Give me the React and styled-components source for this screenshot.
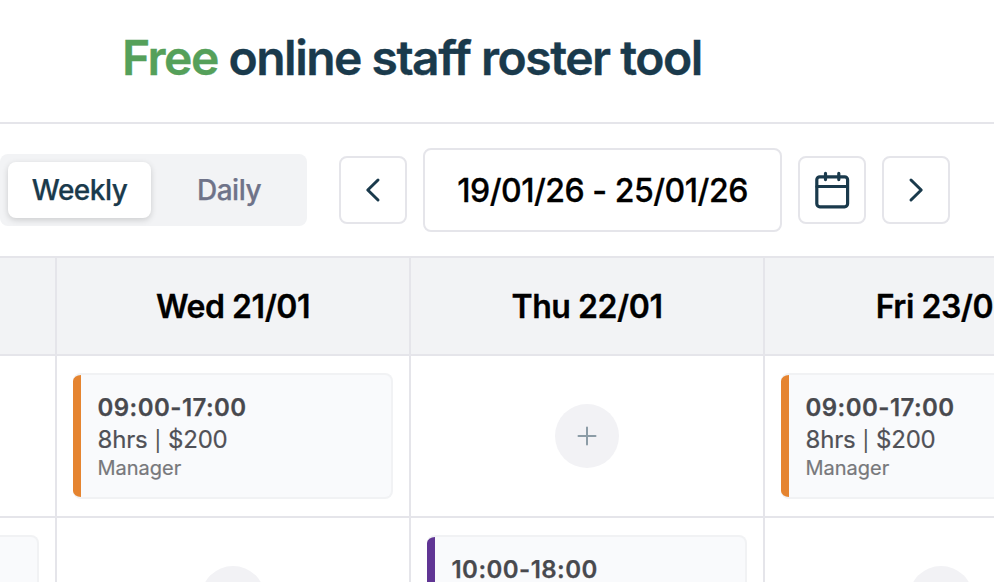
import React from "react";
import styled, { createGlobalStyle } from "styled-components";

const GlobalStyle = createGlobalStyle`
  *, *::before, *::after { box-sizing: border-box; }
  html, body { margin: 0; background: #fff; overflow: hidden; }
  body { font-family: Inter, "Liberation Sans", sans-serif; -webkit-font-smoothing: antialiased; }
  button { font: inherit; margin: 0; padding: 0; border: 0; background: none; }
`;

const Page = styled.div`
  width: 994px;
  height: 582px;
  overflow: hidden;
  background: #fff;
`;

const Header = styled.header`
  height: 124px;
  padding: 26px 0 0 122px;
  border-bottom: 2px solid #e5e5ea;
`;

const Title = styled.h1`
  margin: 0;
  font-size: 48px;
  line-height: 64px;
  font-weight: 600;
  letter-spacing: -1.5px;
  -webkit-text-stroke: 0.35px currentColor;
  white-space: nowrap;
  color: #1a3a4c;
`;

const Accent = styled.span`
  color: #55a05a;
`;

const Toolbar = styled.div`
  display: flex;
  align-items: center;
  height: 132px;
  gap: 16px;
`;

const ViewSwitch = styled.div`
  display: flex;
  width: 307px;
  height: 72px;
  padding: 8px 0 8px 8px;
  margin-right: 16px;
  border-radius: 8px;
  background: #f2f3f5;
`;

const ViewOption = styled.button`
  flex: none;
  width: ${(p) => (p.$active ? "143px" : "156px")};
  height: 56px;
  border-radius: 8px;
  font-size: 28px;
  font-weight: 500;
  line-height: 56px;
  letter-spacing: -0.5px;
  -webkit-text-stroke: 0.25px currentColor;
  text-align: center;
  color: ${(p) => (p.$active ? "#1a3a4c" : "#6f7389")};
  background: ${(p) => (p.$active ? "#fff" : "transparent")};
  box-shadow: ${(p) => (p.$active ? "0 2px 6px rgba(0, 0, 0, 0.16)" : "none")};
`;

const IconButton = styled.button`
  display: flex;
  align-items: center;
  justify-content: center;
  width: 68px;
  height: 68px;
  border: 2px solid #e5e5ea;
  border-radius: 8px;
  background: #fff;
  color: #1a3a4c;
`;

const DateRange = styled.div`
  width: 359px;
  height: 84px;
  border: 2px solid #e5e5ea;
  border-radius: 8px;
  font-size: 32px;
  font-weight: 500;
  line-height: 82px;
  letter-spacing: -0.48px;
  -webkit-text-stroke: 0.3px currentColor;
  font-feature-settings: "calt" 0;
  text-align: center;
  white-space: nowrap;
  color: #000;
`;

const Roster = styled.div`
  display: grid;
  grid-template-columns: 57px repeat(3, 354px);
  grid-template-rows: 100px 162px 162px;
  width: 1119px;
`;

const DayHeading = styled.div`
  border: 0 solid #e5e5ea;
  border-width: 2px 2px 2px 0;
  background: #f2f3f5;
  font-size: 32px;
  font-weight: 600;
  line-height: 98px;
  letter-spacing: -0.45px;
  -webkit-text-stroke: 0.3px currentColor;
  font-feature-settings: "calt" 0;
  text-align: center;
  white-space: nowrap;
  color: #000;
`;

const Cell = styled.div`
  display: flex;
  align-items: center;
  justify-content: ${(p) => (p.$end ? "flex-end" : "center")};
  padding: 0 16px;
  border: 0 solid #e5e5ea;
  border-width: 0 2px 2px 0;
`;

const Card = styled.div`
  display: flex;
  flex: none;
  width: 320px;
  height: 126px;
  border: 2px solid #f1f2f4;
  border-left: 0;
  border-radius: 8px;
  overflow: hidden;
  background: #f9fafc;
`;

const RoleStripe = styled.div`
  flex: none;
  width: 8px;
  background: ${(p) => p.$color};
`;

const CardBody = styled.div`
  padding: 16px 0 0 16.5px;
  white-space: nowrap;
`;

const ShiftTime = styled.div`
  font-size: 24px;
  line-height: 34px;
  font-weight: 600;
  letter-spacing: 0.45px;
  -webkit-text-stroke: 0.25px currentColor;
  color: #48494e;
`;

const Dash = styled.span`
  font-feature-settings: "calt" 0;
`;

const ShiftCost = styled.div`
  font-size: 24px;
  line-height: 30px;
  letter-spacing: -0.2px;
  -webkit-text-stroke: 0.2px currentColor;
  font-feature-settings: "calt" 0;
  color: #505157;
`;

const Bar = styled.span`
  font-size: 20px;
  line-height: 1;
  margin: 0 0.5px;
`;

const ShiftRole = styled.div`
  font-size: 20px;
  line-height: 26px;
  -webkit-text-stroke: 0.2px currentColor;
  color: #77787b;
`;

const AddButton = styled.button`
  display: flex;
  align-items: center;
  justify-content: center;
  width: 64px;
  height: 64px;
  border-radius: 50%;
  background: #f2f2f5;
`;

function Chevron({ direction }) {
  return (
    <svg width="16" height="28" viewBox="0 0 16 28" fill="none" stroke="currentColor" strokeWidth="3" strokeLinecap="round" strokeLinejoin="round">
      <path d={direction === "left" ? "M13 4 2.8 14 13 24" : "M3 4l10.2 10L3 24"} />
    </svg>
  );
}

function CalendarIcon() {
  return (
    <svg width="36" height="40" viewBox="0 0 36 40" fill="none" stroke="currentColor" strokeWidth="3.2" strokeLinecap="round">
      <rect x="2.8" y="6.8" width="30.8" height="30" rx="3" />
      <path d="M3 16.5h30M11.5 3.4v6.2M24.8 3.4v6.2" />
    </svg>
  );
}

function Shift({ color, start, end, hours, pay, role }) {
  return (
    <Card>
      <RoleStripe $color={color} />
      <CardBody>
        <ShiftTime>{start}<Dash>-</Dash>{end}</ShiftTime>
        {hours && <ShiftCost>{hours} <Bar>|</Bar> {pay}</ShiftCost>}
        <ShiftRole>{role}</ShiftRole>
      </CardBody>
    </Card>
  );
}

function AddShift() {
  return (
    <AddButton aria-label="Add shift">
      <svg width="20" height="20" viewBox="0 0 20 20" fill="none" stroke="#8c9ca6" strokeWidth="2" strokeLinecap="round">
        <path d="M1.5 10h17M10 1.5v17" />
      </svg>
    </AddButton>
  );
}

const ORANGE = "#e58430";
const PURPLE = "#603594";

export default function App() {
  return (
    <Page>
      <GlobalStyle />
      <Header>
        <Title><Accent>Free</Accent> online staff roster tool</Title>
      </Header>
      <Toolbar>
        <ViewSwitch>
          <ViewOption $active>Weekly</ViewOption>
          <ViewOption>Daily</ViewOption>
        </ViewSwitch>
        <IconButton aria-label="Previous week"><Chevron direction="left" /></IconButton>
        <DateRange>19/01/26 - 25/01/26</DateRange>
        <IconButton aria-label="Pick a date"><CalendarIcon /></IconButton>
        <IconButton aria-label="Next week"><Chevron direction="right" /></IconButton>
      </Toolbar>
      <Roster>
        <DayHeading />
        <DayHeading>Wed 21/01</DayHeading>
        <DayHeading>Thu 22/01</DayHeading>
        <DayHeading>Fri 23/01</DayHeading>

        <Cell />
        <Cell><Shift color={ORANGE} start="09:00" end="17:00" hours="8hrs" pay="$200" role="Manager" /></Cell>
        <Cell><AddShift /></Cell>
        <Cell><Shift color={ORANGE} start="09:00" end="17:00" hours="8hrs" pay="$200" role="Manager" /></Cell>

        <Cell $end><Card /></Cell>
        <Cell><AddShift /></Cell>
        <Cell><Shift color={PURPLE} start="10:00" end="18:00" /></Cell>
        <Cell><AddShift /></Cell>
      </Roster>
    </Page>
  );
}
